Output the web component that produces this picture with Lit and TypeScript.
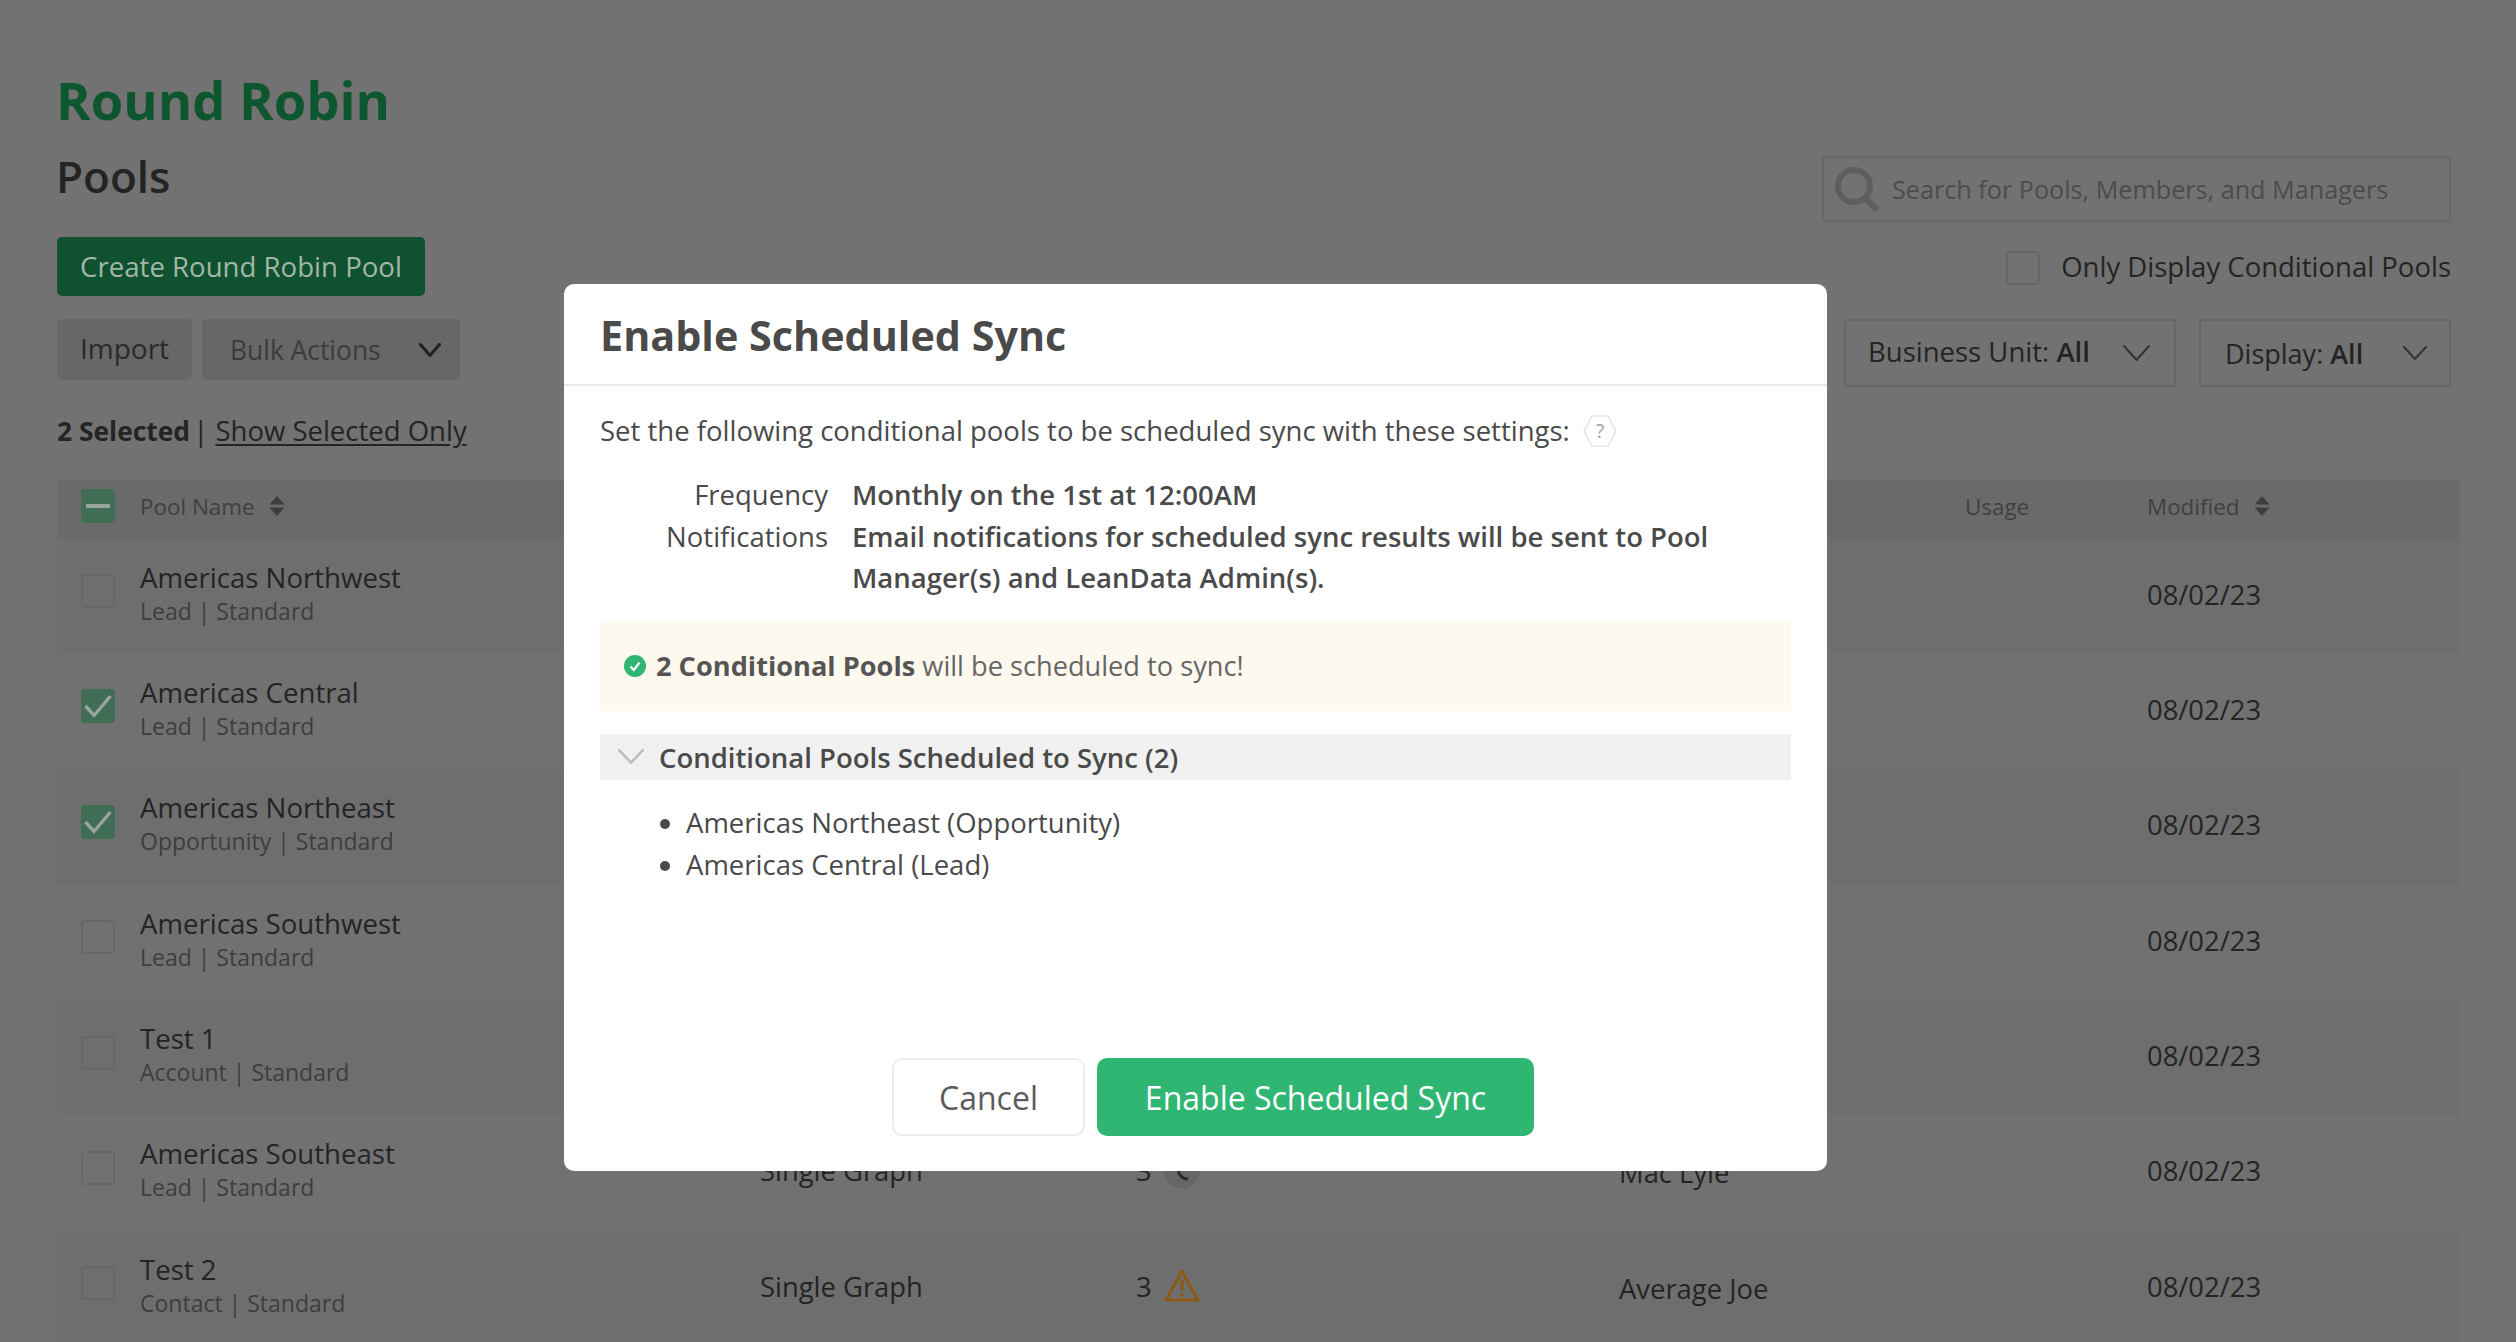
import { LitElement, html, css, svg } from "lit";
import { customElement } from "lit/decorators.js";

const chevron = (w: number, h: number, stroke: string, sw: number) => html`<svg width=${w} height=${h} viewBox="0 0 ${w} ${h}" fill="none"><path d="M${sw / 2} ${sw / 2}L${w / 2} ${h - sw / 2}L${w - sw / 2} ${sw / 2}" stroke=${stroke} stroke-width=${sw} stroke-linecap="round" stroke-linejoin="round"/></svg>`;
const sort = html`<svg class="sort" width="16" height="20" viewBox="0 0 16 20"><path d="M8 0L15.5 8.5H.5Z M.5 11.5H15.5L8 20Z" fill="#3e3e3e"/></svg>`;

interface Row { name: string; sub: string; checked?: boolean; type?: string; count?: string; icon?: "clock" | "warn"; owner?: string; }
const rows: Row[] = [
  { name: "Americas Northwest", sub: "Lead | Standard" },
  { name: "Americas Central", sub: "Lead | Standard", checked: true },
  { name: "Americas Northeast", sub: "Opportunity | Standard", checked: true },
  { name: "Americas Southwest", sub: "Lead | Standard" },
  { name: "Test 1", sub: "Account | Standard" },
  { name: "Americas Southeast", sub: "Lead | Standard", type: "Single Graph", count: "3", icon: "clock", owner: "Mac Lyle" },
  { name: "Test 2", sub: "Contact | Standard", type: "Single Graph", count: "3", icon: "warn", owner: "Average Joe" },
];

@customElement("app-root")
export class AppRoot extends LitElement {
  static styles = css`
    :host { display: block; width: 2516px; height: 1342px; position: relative; overflow: hidden; background: #727272; font-family: "Open Sans", sans-serif; color: #242424; }
    * { box-sizing: border-box; }
    .top { display: flex; justify-content: space-between; padding: 70px 65px 0 57px; }
    .left, .right { display: flex; flex-direction: column; }
    .right { align-items: flex-end; }
    h1 { margin: -1px 0 0 -1px; height: 63px; font-size: 52.5px; line-height: 62px; font-weight: 700; color: #0d5630; }
    h2 { margin: 19px -2px 0 -1px; height: 50px; font-size: 44px; line-height: 50px; font-weight: 600; color: #242424; }
    .create { margin-top: 36px; width: 368px; height: 59px; padding-bottom: 2px; border-radius: 5px; background: #10512f; color: #a2b7a9; font-size: 27.6px; display: flex; align-items: center; justify-content: center; }
    .actions { display: flex; gap: 10px; margin-top: 23px; }
    .graybtn { height: 61px; background: #676767; border-radius: 5px; display: flex; align-items: center; }
    .import { width: 135px; justify-content: center; color: #2a2a2a; font-size: 28px; padding-bottom: 3px; }
    .bulk { width: 258px; padding: 0 19px 0 28px; justify-content: space-between; color: #3c3c3c; font-size: 26.4px; }
    .selected { margin-top: 31px; height: 40px; line-height: 40px; font-size: 27.5px; white-space: nowrap; }
    .selected b { font-weight: 700; font-size: 26.4px; margin-right: -4px; }
    .selected u { text-underline-offset: 3px; }
    .search { margin-top: 86px; width: 629px; height: 66px; border: 2px solid #676767; border-radius: 3px; display: flex; align-items: center; gap: 11px; padding-left: 10px; color: #4c4c4c; font-size: 25.2px; white-space: nowrap; }
    .only { margin-top: 29px; height: 34px; display: flex; align-items: center; gap: 21px; font-size: 27.5px; white-space: nowrap; }
    .only span { margin-top: -4px; }
    .box { width: 34px; height: 34px; border: 2px solid #676767; border-radius: 4px; flex: none; }
    .drops { margin-top: 34px; display: flex; gap: 23px; }
    .drop { height: 68px; border: 2px solid #676767; border-radius: 3px; display: flex; align-items: center; justify-content: space-between; white-space: nowrap; }
    .drop b { font-weight: 600; }
    .bu { width: 332px; padding: 0 24px 0 22px; font-size: 27.5px; }
    .bu span { margin-top: -3px; }
    .disp { width: 252px; padding: 0 22px 0 24px; font-size: 27px; }

    .table { margin: 29px 0 0 57px; width: 2403px; }
    .grid { display: grid; grid-template-columns: 83px 620px 376px 483px 346px 182px 1fr; }
    .head { height: 58px; background: #6a6a6a; align-items: center; font-size: 22.4px; color: #404040; padding-bottom: 6px; }
    .head .th { display: flex; align-items: center; gap: 15px; }
    .head .box, .row .box { margin-left: 24px; }
    .box.on { background: #3f6d55; border-color: #3f6d55; display: flex; align-items: center; justify-content: center; }
    .row { height: 115.4px; background: #717171; }
    .row:nth-child(even) { background: #6e6e6e; }
    .cellbox { padding-top: 36px; }
    .name { padding-top: 18.5px; font-size: 27.6px; line-height: 40px; color: #242424; white-space: nowrap; }
    .sub { font-size: 23px; line-height: 28px; color: #3e3e3e; white-space: nowrap; }
    .cell { font-size: 27.4px; display: flex; align-items: center; height: 112px; white-space: nowrap; }
    .owner { padding-top: 4px; }
    .count { gap: 12px; }
    .date { height: 112px; }

    .modal { position: absolute; left: 564px; top: 284px; width: 1263px; height: 887px; background: #fff; border-radius: 10px; display: flex; flex-direction: column; color: #4a4a4a; }
    .mhead { height: 102px; flex: none; border-bottom: 2px solid #e9e9e9; padding: 1px 0 0 36px; display: flex; align-items: center; font-size: 41.3px; font-weight: 700; }
    .mbody { padding: 0 36px; font-size: 27.5px; }
    .intro { margin-top: 25px; height: 40px; line-height: 40px; display: flex; align-items: center; gap: 13px; white-space: nowrap; }
    .details { margin-top: 23px; display: grid; grid-template-columns: 228px 1fr; column-gap: 24px; line-height: 41.5px; }
    .details .k { text-align: right; }
    .details .v { font-weight: 600; }
    .alert { margin-top: 22px; height: 90px; background: #fdf9ee; display: flex; align-items: center; padding-left: 24px; gap: 10px; color: #666; font-size: 27.2px; white-space: nowrap; }
    .alert b { font-weight: 700; color: #555; }
    .acc { margin-top: 23px; height: 46px; background: #f1f1f1; display: flex; align-items: center; padding-left: 18px; gap: 15px; font-weight: 600; white-space: nowrap; }
    .acc span { margin-top: 2px; }
    ul { margin: 22px 0 0; padding: 0 0 0 86px; line-height: 42px; }
    .foot { margin-top: auto; padding: 0 0 35px 328px; display: flex; gap: 12px; }
    .btn { height: 78px; border-radius: 10px; font-size: 32px; display: flex; align-items: center; justify-content: center; white-space: nowrap; }
    .cancel { width: 193px; border: 2px solid #ececec; color: #5c5c5c; }
    .enable { width: 437px; background: #2eb672; color: #fff; }
  `;

  private renderRow(r: Row) {
    return html`<div class="grid row">
      <div class="cellbox">${r.checked
        ? html`<div class="box on"><svg width="30" height="26" viewBox="0 0 30 26" fill="none"><path d="M2.5 13L11 22.5L27.5 3" stroke="#9ba59f" stroke-width="3.4"/></svg></div>`
        : html`<div class="box"></div>`}</div>
      <div><div class="name">${r.name}</div><div class="sub">${r.sub}</div></div>
      <div class="cell">${r.type ?? ""}</div>
      <div class="cell count">${r.count ?? ""}${r.icon === "warn"
        ? html`<svg width="36" height="34" viewBox="0 0 36 34" fill="none"><path d="M18 2.5L34 31H2Z" stroke="#8a5a14" stroke-width="3" stroke-linejoin="round"/><path d="M18 11.5V21.5M18 24.5V27.5" stroke="#8a5a14" stroke-width="3.4"/></svg>`
        : r.icon === "clock"
          ? html`<svg width="36" height="36" viewBox="0 0 36 36" fill="none"><circle cx="18" cy="18" r="17.5" fill="#666"/><path d="M15 14C13 21 18 26 24 26" stroke="#2c2c2c" stroke-width="3"/></svg>`
          : ""}</div>
      <div class="cell owner">${r.owner ?? ""}</div>
      <div></div>
      <div class="cell date">08/02/23</div>
    </div>`;
  }

  render() {
    return html`
      <div class="top">
        <div class="left">
          <h1>Round Robin</h1>
          <h2>Pools</h2>
          <div class="create">Create Round Robin Pool</div>
          <div class="actions">
            <div class="graybtn import">Import</div>
            <div class="graybtn bulk">Bulk Actions ${chevron(22, 14, "#222", 3)}</div>
          </div>
          <div class="selected"><b>2 Selected</b> | <u>Show Selected Only</u></div>
        </div>
        <div class="right">
          <div class="search">
            <svg width="47" height="47" viewBox="0 0 47 47" fill="none"><circle cx="20" cy="20" r="16" stroke="#5e5e5e" stroke-width="6"/><path d="M31 32L43 44" stroke="#5e5e5e" stroke-width="6.5"/></svg>
            <span>Search for Pools, Members, and Managers</span>
          </div>
          <div class="only"><div class="box"></div><span>Only Display Conditional Pools</span></div>
          <div class="drops">
            <div class="drop bu"><span>Business Unit: <b>All</b></span>${chevron(27, 16, "#333", 2)}</div>
            <div class="drop disp"><span>Display: <b>All</b></span>${chevron(24, 14, "#333", 2)}</div>
          </div>
        </div>
      </div>
      <div class="table">
        <div class="grid head">
          <div class="box on"><svg width="24" height="4" viewBox="0 0 24 4"><rect width="24" height="4" fill="#9ba59f"/></svg></div>
          <div class="th">Pool Name ${sort}</div>
          <div></div><div></div><div></div>
          <div>Usage</div>
          <div class="th">Modified ${sort}</div>
        </div>
        ${rows.map((r) => this.renderRow(r))}
      </div>

      <div class="modal">
        <div class="mhead">Enable Scheduled Sync</div>
        <div class="mbody">
          <div class="intro">
            <span>Set the following conditional pools to be scheduled sync with these settings:</span>
            <svg width="34" height="34" viewBox="0 0 34 34" fill="none"><path d="M9 2H25L33 17L25 32H9L1 17Z" stroke="#e6e6e6" stroke-width="1.6"/>${svg`<text x="17" y="24" text-anchor="middle" font-size="20" font-family="Open Sans" fill="#a6a6a6">?</text>`}</svg>
          </div>
          <div class="details">
            <div class="k">Frequency</div><div class="v">Monthly on the 1st at 12:00AM</div>
            <div class="k">Notifications</div><div class="v">Email notifications for scheduled sync results will be sent to Pool Manager(s) and LeanData Admin(s).</div>
          </div>
          <div class="alert">
            <svg width="22" height="22" viewBox="0 0 22 22" fill="none"><circle cx="11" cy="11" r="11" fill="#2eb672"/><path d="M6.5 11.5L9.8 15L15.5 7.5" stroke="#fff" stroke-width="2.2"/></svg>
            <span><b>2 Conditional Pools</b> will be scheduled to sync!</span>
          </div>
          <div class="acc">${chevron(26, 15, "#bdbdbd", 2.6)}<span>Conditional Pools Scheduled to Sync (2)</span></div>
          <ul><li>Americas Northeast (Opportunity)</li><li>Americas Central (Lead)</li></ul>
        </div>
        <div class="foot">
          <div class="btn cancel">Cancel</div>
          <div class="btn enable">Enable Scheduled Sync</div>
        </div>
      </div>
    `;
  }
}
